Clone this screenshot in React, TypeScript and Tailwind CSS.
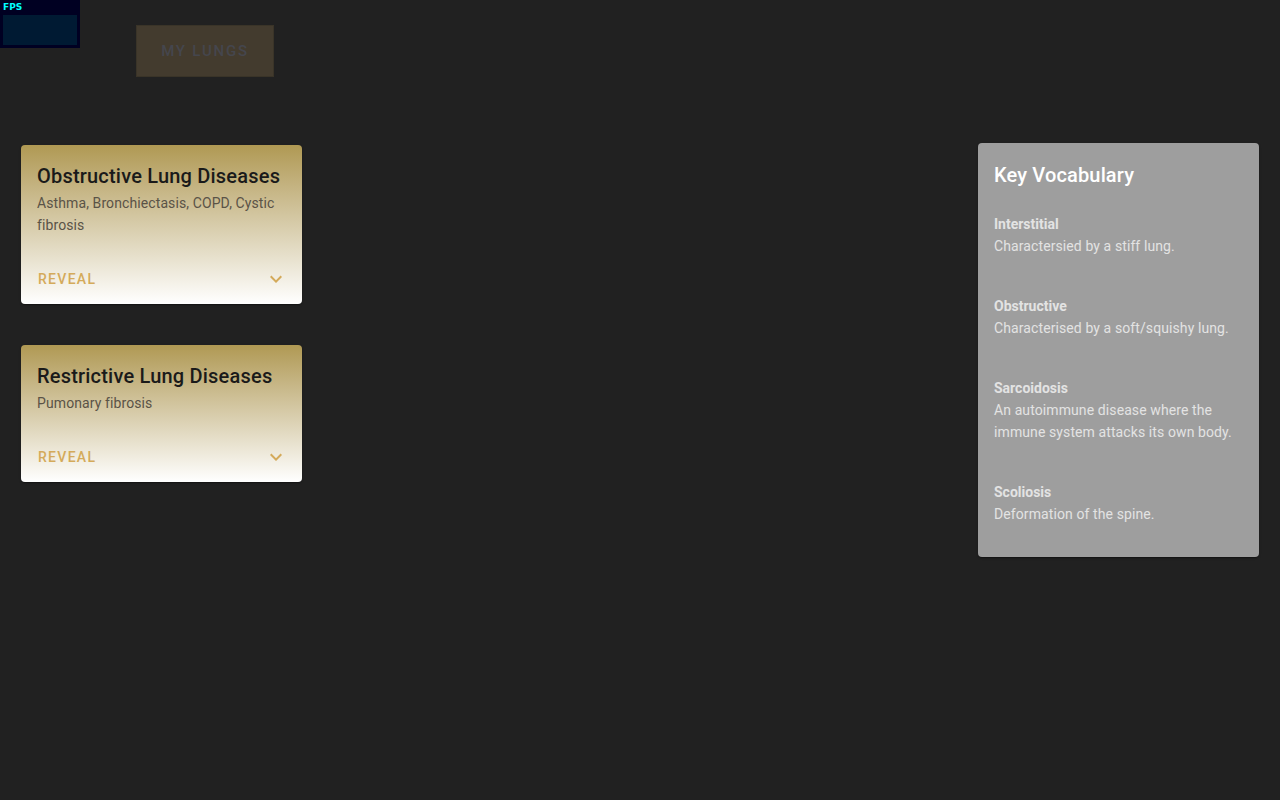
import React from "react";

const font = { fontFamily: "Roboto, 'Noto Sans', sans-serif" };

function Chevron() {
  return (
    <svg width="24" height="24" viewBox="0 0 24 24" className="fill-[#d4aa5a]">
      <path d="M16.59 8.59 12 13.17 7.41 8.59 6 10l6 6 6-6z" />
    </svg>
  );
}

function DiseaseCard({ title, body }: { title: string; body: string }) {
  return (
    <div className="w-[281px] rounded-[4px] bg-gradient-to-b from-[#b09953] to-[#ffffff] shadow-[0_2px_1px_-1px_rgba(0,0,0,0.2),0_1px_1px_0_rgba(0,0,0,0.14),0_1px_3px_0_rgba(0,0,0,0.12)]">
      <div className="px-4 pt-[15px] pb-[25px]">
        <div className="text-[20px] leading-[32px] font-medium text-[#1a1a1a] tracking-[0.2px]">{title}</div>
        <div className="text-[14px] leading-[22px] text-[#5a5347] tracking-[0.1px]">{body}</div>
      </div>
      <div className="flex h-[36px] items-center justify-between pl-[17px] pr-[14px] mb-[7px]">
        <span className="text-[14px] font-medium uppercase tracking-[1.3px] text-[#d4aa5a]">Reveal</span>
        <Chevron />
      </div>
    </div>
  );
}

const vocab = [
  { t: "Interstitial", d: "Charactersied by a stiff lung." },
  { t: "Obstructive", d: "Characterised by a soft/squishy lung." },
  { t: "Sarcoidosis", d: "An autoimmune disease where the immune system attacks its own body." },
  { t: "Scoliosis", d: "Deformation of the spine." },
];

export default function App() {
  return (
    <div className="relative min-h-screen bg-[#212121]" style={font}>
      <div className="absolute left-0 top-0 h-[48px] w-[80px] bg-[#000022] px-[3px] pt-[1px]">
        <div className="text-[9px] font-bold leading-[12px] text-[#00ffff]" style={{ fontFamily: "'DejaVu Sans', sans-serif" }}>FPS</div>
        <div className="mt-[2px] h-[30px] w-[74px] bg-[#001a33]" />
      </div>
      <div className="pl-[136px] pt-[25px]">
        <div className="flex h-[52px] w-[138px] items-center justify-center border border-[#3a3428] bg-[#433b2e] text-[15px] font-medium uppercase tracking-[1.8px] text-[#45464d]">
          My Lungs
        </div>
      </div>
      <div className="mt-[66px] flex items-start justify-between px-[21px]">
        <div className="mt-[2px] flex flex-col gap-[41px]">
          <DiseaseCard title="Obstructive Lung Diseases" body="Asthma, Bronchiectasis, COPD, Cystic fibrosis" />
          <DiseaseCard title="Restrictive Lung Diseases" body="Pumonary fibrosis" />
        </div>
        <div className="w-[281px] rounded-[4px] bg-[#9e9e9e] px-4 pt-4 pb-[32px] shadow-[0_2px_1px_-1px_rgba(0,0,0,0.2),0_1px_1px_0_rgba(0,0,0,0.14),0_1px_3px_0_rgba(0,0,0,0.12)]">
          <div className="text-[20px] leading-[32px] font-medium text-white tracking-[0.15px]">Key Vocabulary</div>
          <div className="mt-[22px] flex flex-col gap-[38px]">
            {vocab.map((v) => (
              <div key={v.t}>
                <div className="text-[14px] leading-[22px] font-bold text-[#e3e3e3]">{v.t}</div>
                <div className="text-[14px] leading-[22px] text-[#e3e3e3] tracking-[0.1px]">{v.d}</div>
              </div>
            ))}
          </div>
        </div>
      </div>
    </div>
  );
}
